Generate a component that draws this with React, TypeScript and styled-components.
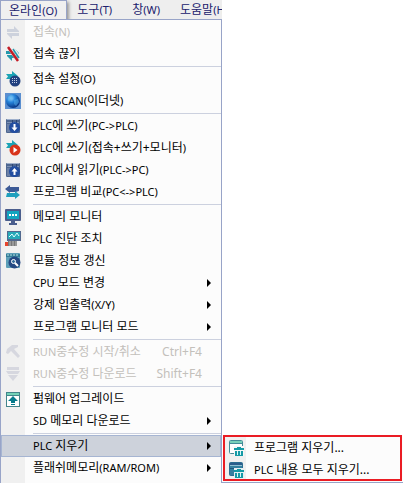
import React from "react";
import styled, { createGlobalStyle, css } from "styled-components";

const GlobalStyle = createGlobalStyle`
  * { box-sizing: border-box; }
  body {
    margin: 0;
    overflow: hidden;
    background: #ffffff;
    font-family: "Noto Sans", "Noto Sans CJK KR", sans-serif;
    font-size: 12px;
  }
  button { font: inherit; color: inherit; border: 0; background: none; padding: 0; margin: 0; text-align: left; }
`;

const Page = styled.div`
  display: grid;
  grid-template-columns: 222fr 181fr;
  min-height: 100vh;
`;

const Window = styled.main`
  display: flex;
  flex-direction: column;
  min-width: 0;
`;

const MenuBar = styled.nav`
  display: flex;
  height: 20px;
  flex: none;
  overflow: hidden;
  background: #eeeeee;
  border-bottom: 1px solid #98a4c8;
`;

const MenuTab = styled.button<{ $open?: boolean }>`
  && {
    height: 19px;
    padding: 0 10px;
    line-height: 20px;
    white-space: nowrap;
    color: #20206c;
    flex: none;
  }
  ${(p) =>
    p.$open &&
    css`
      && {
        height: 20px;
        padding: 0 9px 0 8px;
        border: 1px solid #98a4c8;
        border-bottom: 0;
        line-height: 18px;
        background: #f0f0f0;
        box-shadow: 2px 2px 3px #9a9a9a;
      }
    `}
`;

const Latin = styled.span`
  font-size: 11px;
`;

const Menu = styled.div`
  display: flex;
  flex-direction: column;
  flex: 1;
  padding-top: 1px;
  border-left: 1px solid #98a4c8;
  border-right: 1px solid #98a4c8;
  background: linear-gradient(to right, #f0f0f0 24px, #fcfcfc 24px);
`;

const Entry = styled.div`
  position: relative;
  flex: none;
`;

const MenuItem = styled.button<{ $selected?: boolean }>`
  && {
    display: grid;
    grid-template-columns: 24px 1fr auto;
    column-gap: 8px;
    align-items: center;
    width: 100%;
    height: 22px;
    padding-right: 10px;
    line-height: 22px;
    white-space: nowrap;
    color: #000000;
  }
  &&:disabled { color: #c3c0bb; }
  ${(p) =>
    p.$selected &&
    css`
      && {
        background: #cdd2db;
        box-shadow: inset 0 0 0 1px #a6b5d2;
      }
    `}
`;

const IconCell = styled.span`
  display: flex;
  justify-content: center;
  height: 16px;
`;

const Label = styled.span`
  height: 22px;
`;

const Shortcut = styled.span`
  height: 22px;
  padding-right: 9px;
`;

const Separator = styled.hr`
  flex: none;
  height: 1px;
  margin: 1px 0 1px 32px;
  border: 0;
  background: #ccd1df;
`;

const SubMenu = styled.div`
  position: absolute;
  top: 0;
  left: 100%;
  min-width: 182px;
  padding: 0 1px 1px;
  border-left: 1px solid #98a4c8;
  border-bottom: 1px solid #98a4c8;
  background: #fcfcfc;
`;

const Highlight = styled.div`
  display: grid;
  row-gap: 2px;
  border: 2px solid #ea1c24;
  background: linear-gradient(to right, #f0f0f0 21px, #fcfcfc 21px);
`;

const SubItem = styled(MenuItem)`
  && {
    grid-template-columns: 21px 1fr;
    height: 20px;
  }
`;

const Svg = styled.svg`
  display: block;
  flex: none;
`;

function Text({ children }: { children: string }) {
  return (
    <>
      {children.split(/([A-Z<>/()-]+)/).map((run, i) =>
        i % 2 ? <Latin key={i}>{run}</Latin> : run
      )}
    </>
  );
}

function Icon({ children }: { children: React.ReactNode }) {
  return (
    <Svg width="16" height="16" viewBox="0 0 16 16" aria-hidden="true">
      {children}
    </Svg>
  );
}

const swapShape = (
  <>
    <path d="M2 5h7V2l5 5v1H2z" />
    <path d="M14 9v3H7v3L2 10V9z" />
  </>
);

const ConnectIcon = () => (
  <Icon>
    <g fill="#cdd2dd">{swapShape}</g>
  </Icon>
);

const DisconnectIcon = () => (
  <Icon>
    <path d="M1 5h8V2l5 5v1H1zM14 9v3H7v3L2 10V9z" fill="#2498ac" />
    <path d="M3 1l10 14M7 1l8 11" stroke="#f0f0f0" strokeWidth="3" />
    <path d="M3 1l10 14" stroke="#c41c26" strokeWidth="2.5" />
    <path d="M8 3l6 9" stroke="#2498ac" strokeWidth="1.5" />
  </Icon>
);

const ArrowBase = () => <path d="M1 3h6V0l6 5-6 5V8H1l2-2.500z" fill="#1ba3b5" />;

const SettingsIcon = () => (
  <Icon>
    <ArrowBase />
    <circle cx="10" cy="10" r="5.5" fill="#21407f" />
    <path d="M7 7.500h6M7 9.500h6M7 11.500h6" stroke="#c3cee5" strokeDasharray="1 1" />
  </Icon>
);

const GlobeIcon = () => (
  <Icon>
    <defs>
      <radialGradient id="globe" cx="35%" cy="30%" r="75%">
        <stop offset="0" stopColor="#9bd6fb" />
        <stop offset=".4" stopColor="#2684da" />
        <stop offset="1" stopColor="#062e7d" />
      </radialGradient>
    </defs>
    <path fill="#5b8fd0" d="M0 0h16v16H0z" />
    <circle cx="8" cy="8" r="7" fill="url(#globe)" />
    <path d="M3 4l3-2 2 2-2 3-3 1zM9 7l4-1 1 3-3 4-2-2z" fill="#56b1ed" opacity=".5" />
  </Icon>
);

const TransferIcon = ({ up }: { up?: boolean }) => (
  <Icon>
    <rect x="1" y="1" width="14" height="14" rx="1" fill="#4e6791" />
    <path d="M2 1.500h12" stroke="#9fb0cc" />
    <path d="M2 4.500h12" stroke="#7d92b6" />
    <path d="M2 6h3v8H2z" fill="#6b80a6" />
    <path d="M7.500 2v3M11.500 2v3" stroke="#2d4674" />
    <circle cx="9.5" cy="9.5" r="5.5" fill="#234ea0" />
    <path
      d={up ? "M9.5 6l3 3.500h-2V13h-2V9.500h-2z" : "M9.5 13l-3-3.500h2V6h2v3.500h2z"}
      fill="#ffffff"
    />
  </Icon>
);

const RunIcon = () => (
  <Icon>
    <ArrowBase />
    <circle cx="10" cy="10" r="5.500" fill="#d8341a" />
    <path d="M8.500 7l4 3-4 3z" fill="#ffffff" />
  </Icon>
);

const CompareIcon = () => (
  <Icon>
    <path d="M0 5l5-4v2h9v4l-3 1H5v1z" fill="#3c5a96" />
    <path d="M15 11l-5 4v-2H1l1-4h8V7z" fill="#1f9fbd" />
  </Icon>
);

const MonitorIcon = () => (
  <Icon>
    <rect x="0" y="0" width="16" height="12" rx="1" fill="#4b5e8d" />
    <path d="M2 2h12v8H2z" fill="#13a5c0" />
    <path d="M4 5h2v2H4zM7 5h2v2H7zM10 5h2v2h-2z" fill="#ffffff" />
    <path d="M6 12h4v2h2v2H4v-2h2z" fill="#4b5e8d" />
  </Icon>
);

const DiagnoseIcon = () => (
  <Icon>
    <rect x="2" y="0" width="14" height="10" fill="#52698f" />
    <path d="M3 1h12v7H3z" fill="#28a9b8" />
    <path d="M4 6l3-3 2 3 3-4 2 3" fill="none" stroke="#e3ffff" />
    <path d="M0 11h3v4H0z" fill="#e7442d" />
    <path d="M3 10h9v5H3z" fill="#777777" />
    <path d="M5 10v5M8 10v5M11 10v5" stroke="#bbbbbb" />
  </Icon>
);

const ModuleIcon = () => (
  <Icon>
    <rect x="1" y="0" width="14" height="15" rx="1" fill="#5d9fb8" />
    <path d="M1 1h14v3H1z" fill="#347c98" />
    <path d="M2 2h12" stroke="#b8e3e5" strokeDasharray="2 1" />
    <circle cx="9.500" cy="9.500" r="6" fill="#244882" />
    <circle cx="8.500" cy="8.500" r="2" fill="#39709e" stroke="#ffffff" />
    <path d="M10 10l3 3" stroke="#ffffff" strokeWidth="2" />
  </Icon>
);

const HammerIcon = () => (
  <Icon>
    <path d="M1 9L2 5l5-4h6v2L9 5l6 7-2 2-7-7-3 3z" fill="#d6d7df" />
  </Icon>
);

const DownloadIcon = () => (
  <Icon>
    <path d="M2 1h12v3H2zM1 5h14l-2 3H3zM3 9h10l-5 6z" fill="#d6d7df" />
  </Icon>
);

const FirmwareIcon = () => (
  <Icon>
    <rect x="1.500" y="1.500" width="13" height="14" fill="#ffffff" stroke="#43858b" />
    <path d="M2 2h12v2H2z" fill="#74d2b7" />
    <path d="M1 4.500h14" stroke="#43858b" />
    <path d="M8 5l5 5h-3v2H6v-2H3zM6 13h4v1H6z" fill="#087b8c" />
  </Icon>
);

const EraseIcon = ({ filled }: { filled?: boolean }) => (
  <Icon>
    <rect x="1.500" y=".5" width="13" height="13" rx="1" fill={filled ? "#347f9f" : "#ffffff"} stroke={filled ? "#2b6c91" : "#438c98"} />
    <path d="M2 1h12v2H2z" fill={filled ? "#2b5d8b" : "#79d0ba"} />
    <path d="M2 3.500h12" stroke={filled ? "#8fc0d2" : "#438c98"} />
    {filled && <path d="M2 6h12v1H2z" fill="#1d577d" />}
    <path d="M6 6h10v10H6z" fill={filled ? "#e4eef2" : "#f8f8f8"} />
    <path d="M9 7h4v1h3v2H6V8h3zM7 11h8v5H7z" fill="#159aa6" />
    <path d="M9.500 11v4M12.500 11v4" stroke="#d9f7f7" />
  </Icon>
);

const Arrow = () => (
  <Svg width="4" height="8" viewBox="0 0 4 8" aria-hidden="true">
    <path d="M0 0l4 4-4 4z" fill="#000000" />
  </Svg>
);

type Item = {
  label: string;
  icon?: React.ReactNode;
  shortcut?: string;
  disabled?: boolean;
  more?: boolean;
  children?: Item[];
};

const groups: Item[][] = [
  [
    { label: "접속(N)", icon: <ConnectIcon />, disabled: true },
    { label: "접속 끊기", icon: <DisconnectIcon /> },
  ],
  [
    { label: "접속 설정(O)", icon: <SettingsIcon /> },
    { label: "PLC SCAN(이더넷)", icon: <GlobeIcon /> },
  ],
  [
    { label: "PLC에 쓰기(PC->PLC)", icon: <TransferIcon /> },
    { label: "PLC에 쓰기(접속+쓰기+모니터)", icon: <RunIcon /> },
    { label: "PLC에서 읽기(PLC->PC)", icon: <TransferIcon up /> },
    { label: "프로그램 비교(PC<->PLC)", icon: <CompareIcon /> },
  ],
  [
    { label: "메모리 모니터", icon: <MonitorIcon /> },
    { label: "PLC 진단 조치", icon: <DiagnoseIcon /> },
    { label: "모듈 정보 갱신", icon: <ModuleIcon /> },
    { label: "CPU 모드 변경", more: true },
    { label: "강제 입출력(X/Y)", more: true },
    { label: "프로그램 모니터 모드", more: true },
  ],
  [
    { label: "RUN중수정 시작/취소", icon: <HammerIcon />, shortcut: "Ctrl+F4", disabled: true },
    { label: "RUN중수정 다운로드", icon: <DownloadIcon />, shortcut: "Shift+F4", disabled: true },
  ],
  [
    { label: "펌웨어 업그레이드", icon: <FirmwareIcon /> },
    { label: "SD 메모리 다운로드", more: true },
  ],
  [
    {
      label: "PLC 지우기",
      more: true,
      children: [
        { label: "프로그램 지우기...", icon: <EraseIcon /> },
        { label: "PLC 내용 모두 지우기...", icon: <EraseIcon filled /> },
      ],
    },
    { label: "플래쉬메모리(RAM/ROM)", more: true },
  ],
];

const tabs = ["온라인(O)", "도구(T)", "창(W)", "도움말(H)"];

export default function App() {
  return (
    <Page>
      <GlobalStyle />
      <Window>
        <MenuBar>
          {tabs.map((tab, i) => (
            <MenuTab key={tab} $open={i === 0} aria-expanded={i === 0}>
              <Text>{tab}</Text>
            </MenuTab>
          ))}
        </MenuBar>
        <Menu role="menu">
          {groups.map((group, g) => (
            <React.Fragment key={g}>
              {g > 0 && <Separator />}
              {group.map((item) => (
                <Entry key={item.label}>
                  <MenuItem role="menuitem" disabled={item.disabled} $selected={!!item.children}>
                    <IconCell>{item.icon}</IconCell>
                    <Label>
                      <Text>{item.label}</Text>
                    </Label>
                    {item.shortcut && <Shortcut>{item.shortcut}</Shortcut>}
                    {item.more && <Arrow />}
                  </MenuItem>
                  {item.children && (
                    <SubMenu role="menu">
                      <Highlight>
                        {item.children.map((child) => (
                          <SubItem key={child.label} role="menuitem">
                            <IconCell>{child.icon}</IconCell>
                            <Label>
                              <Text>{child.label}</Text>
                            </Label>
                          </SubItem>
                        ))}
                      </Highlight>
                    </SubMenu>
                  )}
                </Entry>
              ))}
            </React.Fragment>
          ))}
        </Menu>
      </Window>
    </Page>
  );
}
